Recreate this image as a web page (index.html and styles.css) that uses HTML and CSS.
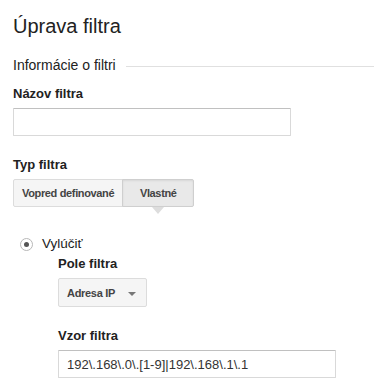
FILE: index.html
```html
<!DOCTYPE html>
<html lang="sk">
<head>
  <meta charset="UTF-8">
  <meta name="viewport" content="width=device-width, initial-scale=1.0">
  <title>Úprava filtra</title>
  <link rel="stylesheet" href="styles.css">
</head>
<body>
  <div class="page">
    <h1 class="page-title">Úprava filtra</h1>
    <div class="section-head"><span>Informácie o filtri</span></div>

    <div class="field">
      <label class="field-label" for="filter-name">Názov filtra</label>
      <input class="text-input" id="filter-name" type="text">
    </div>

    <div class="field">
      <div class="field-label">Typ filtra</div>
      <div class="toggle" role="tablist">
        <button class="toggle-btn" role="tab" aria-selected="false">Vopred definované</button>
        <button class="toggle-btn is-active" role="tab" aria-selected="true">Vlastné</button>
      </div>
    </div>

    <label class="radio">
      <span class="radio-mark" aria-hidden="true"></span>
      <span>Vylúčiť</span>
    </label>

    <div class="sub">
      <div class="field">
        <div class="field-label">Pole filtra</div>
        <button class="select">Adresa IP</button>
      </div>
      <div class="field">
        <label class="field-label" for="filter-pattern">Vzor filtra</label>
        <input class="text-input" id="filter-pattern" type="text" value="192\.168\.0\.[1-9]|192\.168\.1\.1">
      </div>
    </div>
  </div>
</body>
</html>
```

FILE: styles.css
```css
*, *::before, *::after {
  box-sizing: border-box;
}
body {
  margin: 0;
  background: #ffffff;
  color: #222222;
  font-family: "Liberation Sans", Arial, sans-serif;
}
.page {
  padding: 14px 0 0 13px;
}
.page-title {
  margin: 0;
  font-size: 20px;
  line-height: 24px;
  font-weight: normal;
}
.section-head {
  display: flex;
  margin-top: 18px;
  font-size: 14px;
  line-height: 18px;
}
.section-head::after {
  content: "";
  flex: 1;
  height: 1px;
  margin: 10px 0 0 10px;
  background: #e0e0e0;
}
.field {
  margin-top: 21px;
}
.section-head + .field {
  margin-top: 12px;
}
.sub .field:first-child {
  margin-top: 4px;
}
.field-label {
  display: block;
  margin-bottom: 6px;
  font-size: 13px;
  line-height: 16px;
  font-weight: bold;
}
.text-input {
  display: block;
  width: 278px;
  height: 28px;
  margin: 0;
  padding: 0 8px;
  border: 1px solid #d9d9d9;
  border-top-color: #c0c0c0;
  border-radius: 1px;
  background: #ffffff;
  color: #333333;
  font-family: inherit;
  font-size: 13px;
  outline: none;
}
.toggle {
  display: flex;
}
.toggle-btn {
  position: relative;
  height: 28px;
  min-width: 72px;
  margin: 0;
  padding: 0 8px;
  border: 1px solid #dcdcdc;
  background: #f5f5f5;
  color: #444444;
  font-family: inherit;
  font-size: 11px;
  font-weight: bold;
  letter-spacing: -0.35px;
  cursor: pointer;
}
.toggle-btn:first-child {
  border-radius: 2px 0 0 2px;
}
.toggle-btn + .toggle-btn {
  margin-left: -1px;
  border-radius: 0 2px 2px 0;
}
.toggle-btn.is-active {
  border-color: #cfcfcf;
  background: #e9e9e9;
  box-shadow: inset 0 1px 2px rgba(0, 0, 0, 0.08);
}
.toggle-btn.is-active::after {
  content: "";
  position: absolute;
  top: 100%;
  left: 50%;
  margin: 1px 0 0 -6px;
  border-left: 6px solid transparent;
  border-right: 6px solid transparent;
  border-top: 7px solid #dddddd;
}
.radio {
  display: flex;
  align-items: center;
  gap: 9px;
  margin: 29px 0 0 7px;
  font-size: 13.5px;
  line-height: 16px;
  cursor: pointer;
}
.radio-mark {
  display: flex;
  align-items: center;
  justify-content: center;
  width: 13px;
  height: 13px;
  border: 1px solid #b8b8b8;
  border-radius: 50%;
  background: #ffffff;
}
.radio-mark::after {
  content: "";
  width: 5px;
  height: 5px;
  border-radius: 50%;
  background: #555555;
}
.sub {
  margin-left: 45px;
}
.select {
  display: inline-flex;
  align-items: center;
  gap: 13px;
  height: 29px;
  margin: 0;
  padding: 0 10px 0 8px;
  border: 1px solid #dcdcdc;
  border-radius: 2px;
  background: #f5f5f5;
  color: #444444;
  font-family: inherit;
  font-size: 11px;
  font-weight: bold;
  letter-spacing: -0.3px;
  cursor: pointer;
}
.select::after {
  content: "";
  margin-top: 2px;
  border-left: 4px solid transparent;
  border-right: 4px solid transparent;
  border-top: 4px solid #777777;
}
```
